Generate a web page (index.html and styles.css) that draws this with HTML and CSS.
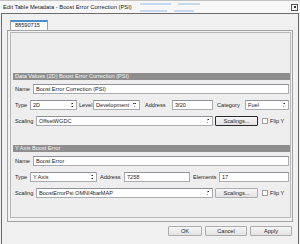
FILE: index.html
```html
<!DOCTYPE html>
<html>
<head>
    <title>Edit Table Metadata</title>
    <link rel="stylesheet" href="styles.css">
</head>
<body>
    <div class="window">
        <div class="titlebar">
            <span class="title">Edit Table Metadata - Boost Error Correction (PSI)</span>
            <div class="ghost">
                <div class="ghost-line"><i class="g1"></i><i class="g2"></i></div>
                <div class="ghost-line"><i class="g3"></i><i class="g4"></i></div>
            </div>
            <span class="close-btn"><span></span></span>
        </div>
        <div class="frame">
            <div class="tabbar">
                <div class="tab">88590715</div>
            </div>
            <div class="pane">
                <div class="scroll">
                    <!-- Data values -->
                    <div class="section first">
                        <div class="section-head">Data Values (2D) Boost Error Correction (PSI)</div>
                        <div class="row">
                            <label class="lbl-name">Name</label>
                            <div class="field grow">Boost Error Correction (PSI)</div>
                        </div>
                        <div class="row">
                            <label class="lbl-type">Type</label>
                            <div class="combo w47">2D</div>
                            <label class="lbl-level">Level</label>
                            <div class="combo w47">Development</div>
                            <label class="lbl-addr">Address</label>
                            <div class="field w41">3f20</div>
                            <label class="lbl-cat">Category</label>
                            <div class="combo grow">Fuel</div>
                        </div>
                        <div class="row">
                            <label class="lbl-scaling">Scaling</label>
                            <div class="combo w177">OffsetWGDC</div>
                            <button class="btn scalings focused">Scalings...</button>
                            <span class="check"></span>
                            <span class="check-text">Flip Y</span>
                        </div>
                    </div>

                    <!-- Y axis -->
                    <div class="section second">
                        <div class="section-head">Y Axis Boost Error</div>
                        <div class="row">
                            <label class="lbl-name">Name</label>
                            <div class="field grow">Boost Error</div>
                        </div>
                        <div class="row">
                            <label class="lbl-type">Type</label>
                            <div class="combo w67">Y Axis</div>
                            <label class="lbl-addr2">Address</label>
                            <div class="field w66">7258</div>
                            <label class="lbl-elem">Elements</label>
                            <div class="field grow">17</div>
                        </div>
                        <div class="row">
                            <label class="lbl-scaling">Scaling</label>
                            <div class="combo w177">BoostErrorPsi OMNI4barMAP</div>
                            <button class="btn scalings">Scalings...</button>
                            <span class="check"></span>
                            <span class="check-text">Flip Y</span>
                        </div>
                    </div>
                </div>
            </div>
            <div class="buttons">
                <button class="btn ok">OK</button>
                <button class="btn">Cancel</button>
                <button class="btn">Apply</button>
            </div>
        </div>
    </div>
</body>
</html>
```

FILE: styles.css
```css
body {
    margin: 0;
    background: #f0f0f0;
    font-family: "Liberation Sans", Arial, sans-serif;
    color: #1e1e1e;
}
.window {
    width: 300px;
    height: 244px;
    overflow: hidden;
}

/* Title bar */
.titlebar {
    display: flex;
    align-items: center;
    height: 12px;
    border-top: 1px solid #c4c4c4;
    padding-left: 3px;
    background: #f7f7f7;
}
.title {
    font-size: 5.8px;
    color: #202020;
    white-space: nowrap;
}
.ghost {
    display: flex;
    flex-direction: column;
    gap: 5px;
    margin-left: 8px;
}
.ghost-line {
    display: flex;
    gap: 7px;
}
.ghost-line i {
    display: block;
    height: 2px;
    background: #c3daf1;
}
.g1 { width: 31px; }
.g2 { width: 22px; }
.g3 { width: 27px; }
.g4 { width: 20px; }
.close-btn {
    margin-left: auto;
    margin-right: 2px;
    width: 5px;
    height: 5px;
    border: 1px solid #555;
    display: flex;
    align-items: center;
    justify-content: center;
}
.close-btn span {
    width: 2px;
    height: 2px;
    background: #333;
}

/* Window frame */
.frame {
    height: 231px;
    margin: 0 1px 0 1px;
    border: 1px solid #6b6b6b;
    border-bottom: none;
    padding: 0 5px 0 5px;
    box-sizing: border-box;
}
.tabbar {
    display: flex;
    height: 10px;
    margin-top: 6px;
    padding-left: 3px;
}
.tab {
    width: 38px;
    box-sizing: border-box;
    border: 1px solid #a2a2a2;
    border-top: 2px solid #4d8fc9;
    border-bottom: none;
    background: #fbfbfb;
    font-size: 5.6px;
    line-height: 7px;
    padding-left: 4px;
}
.pane {
    height: 192px;
    box-sizing: border-box;
    border: 1px solid #a2a2a2;
    background: #f2f2f2;
    padding: 1px 1px 3px 2px;
}
.scroll {
    height: 100%;
    box-sizing: border-box;
    border: 1px solid #b8b8b8;
    background: #eeeeee;
    padding: 0 0 0 2px;
}

/* Sections */
.section.first {
    margin-top: 40px;
}
.section.second {
    margin-top: 19px;
}
.section-head {
    height: 7px;
    line-height: 7px;
    background: #8e8e8e;
    color: #f4f4f4;
    font-size: 5.6px;
    padding-left: 2px;
    white-space: nowrap;
    margin-bottom: 4px;
}
.row {
    display: flex;
    align-items: center;
    height: 10px;
    margin-bottom: 6px;
    padding-left: 2px;
    padding-right: 1px;
    font-size: 5.6px;
}
.row label {
    white-space: nowrap;
    box-sizing: border-box;
}
.lbl-name { width: 18px; }
.lbl-type { width: 15px; }
.lbl-level { width: 16px; padding-left: 2px; }
.lbl-addr { width: 32px; padding-left: 5px; }
.lbl-cat { width: 32px; padding-left: 4px; }
.lbl-scaling { width: 21px; }
.lbl-addr2 { width: 27px; padding-left: 3px; }
.lbl-elem { width: 29px; padding-left: 3px; }

.field,
.combo {
    height: 10px;
    box-sizing: border-box;
    background: #ffffff;
    border: 1px solid #a9abb1;
    border-top-color: #8e9196;
    padding-left: 2px;
    line-height: 8px;
    white-space: nowrap;
    overflow: hidden;
}
.combo {
    position: relative;
    border-radius: 1px;
    padding-right: 7px;
}
.combo::after {
    content: "";
    position: absolute;
    right: 3px;
    top: 2px;
    width: 3px;
    height: 4px;
    background:
        linear-gradient(to top right, transparent 50%, #2a2a2a 50%) 0 0 / 1.5px 1.5px no-repeat,
        linear-gradient(to top left, transparent 50%, #2a2a2a 50%) 1.5px 0 / 1.5px 1.5px no-repeat,
        linear-gradient(to bottom right, transparent 50%, #2a2a2a 50%) 0 2.5px / 1.5px 1.5px no-repeat,
        linear-gradient(to bottom left, transparent 50%, #2a2a2a 50%) 1.5px 2.5px / 1.5px 1.5px no-repeat;
}
.grow { flex: 1; }
.w41 { width: 41px; }
.w47 { width: 47px; }
.w66 { width: 66px; }
.w67 { width: 67px; }
.w177 { width: 177px; }

.btn {
    height: 10px;
    box-sizing: border-box;
    border: 1px solid #adadad;
    border-radius: 1px;
    background: linear-gradient(#f6f6f6, #e2e2e2);
    font-family: "Liberation Sans", Arial, sans-serif;
    font-size: 5.6px;
    color: #1e1e1e;
    padding: 0;
    line-height: 8px;
}
.scalings {
    width: 43px;
    margin-left: 2px;
}
.scalings.focused {
    border-color: #2b2b2b;
}
.check {
    width: 6px;
    height: 6px;
    box-sizing: border-box;
    border: 1px solid #a0a0a0;
    background: #fcfcfc;
    margin-left: 4px;
}
.check-text {
    margin-left: 2px;
}

/* Dialog buttons */
.buttons {
    display: flex;
    justify-content: flex-end;
    gap: 3px;
    margin-top: 4px;
    padding-right: 1px;
}
.buttons .btn {
    width: 42px;
}
.buttons .ok {
    width: 34px;
}
```
